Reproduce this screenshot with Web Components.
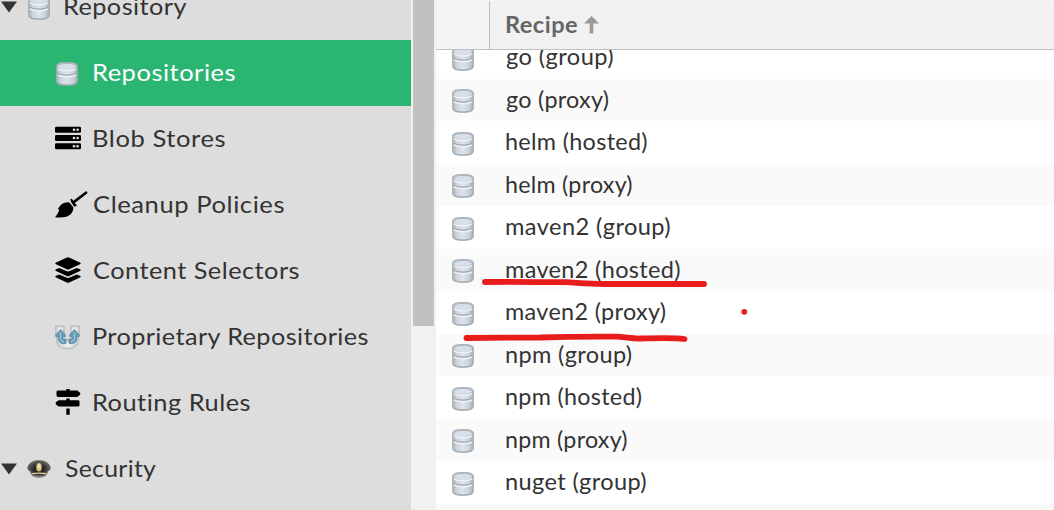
<!DOCTYPE html>
<html lang="en">
<head>
<meta charset="utf-8">
<title>Repositories</title>
<style>
html, body { margin: 0; height: 100%; overflow: hidden; background: #fff; font-family: Lato, "Open Sans", sans-serif; }
</style>
</head>
<body>
<repo-console></repo-console>
<script>
const define = (name, html, setup) => {
  const tpl = document.createElement('template');
  tpl.innerHTML = html;
  customElements.define(name, class extends HTMLElement {
    connectedCallback() {
      if (this.shadowRoot) return;
      this.attachShadow({ mode: 'open' }).append(tpl.content.cloneNode(true));
      if (setup) setup(this, this.shadowRoot);
    }
  });
};

const ICONS = {
  database: `<svg width="22" height="23.500" viewBox="0 0 22 24" preserveAspectRatio="none"><defs>
    <linearGradient id="b"><stop offset="0" stop-color="#a9b1b8"/><stop offset=".2" stop-color="#cdd4dc"/><stop offset=".5" stop-color="#dce3ec"/><stop offset=".8" stop-color="#c9d0d8"/><stop offset="1" stop-color="#a2abb2"/></linearGradient></defs>
    <path d="M.6 4.500C.6 1.600 3 .5 11 .5s10.400 1.100 10.400 4v15c0 3-2.500 4.300-10.400 4.300S.6 22.500.6 19.500z" fill="url(#b)" stroke="#a4adb3" stroke-width=".9"/>
    <ellipse cx="11" cy="4.600" rx="8.800" ry="2.900" fill="#d7dfe8"/>
    <path d="M2.500 3.500Q4 1.400 11 1.400t8.500 2.100" fill="none" stroke="#a6afb6" stroke-width=".9"/>
    <path d="M1.800 6.600Q4 9 11 9t9.200-2.400" fill="none" stroke="#eef2f6" stroke-width="1.300"/>
    <path d="M1 11.300Q4 13.300 11 13.300t10-2" fill="none" stroke="#a1a9b1" stroke-width="1.300"/>
    <path d="M1.800 13Q4.500 15 11 15t9.200-2" fill="none" stroke="#eff3f8" stroke-width="1.500"/>
    <path d="M1.500 21Q4 23.500 11 23.500t9.500-2.500" fill="none" stroke="#9aa7ac" stroke-width="1"/></svg>`,
  server: `<svg width="26" height="24" viewBox="0 0 26 24"><g><rect y=".7" width="26" height="6" rx="1.200"/><rect y="9" width="26" height="6" rx="1.200"/><rect y="17.200" width="26" height="6" rx="1.200"/></g><g fill="#ddd"><circle cx="19" cy="3.800" r="1.300"/><circle cx="22.600" cy="3.800" r="1.300"/><circle cx="19" cy="12" r="1.300"/><circle cx="22.600" cy="12" r="1.300"/><circle cx="19" cy="20.200" r="1.300"/><circle cx="22.600" cy="20.200" r="1.300"/></g></svg>`,
  broom: `<svg width="33" height="27" viewBox="0 0 33 27"><path d="M0 26.200C2 24 3.400 21 4.500 18.400L3.200 18.500Q2.800 17.500 3.800 16.400C6 13 9 11.300 12.500 11.200L14.500 11.600 18.300 16.500C18.500 21 15.500 24.400 11.500 25.700Q7 26.800 0 26.200z"/><path d="M15.300 8.400Q16.300 7.300 17.200 8.300L18.300 9.700 30.500.5Q31.600-.1 32.200.9T31.800 2.700L19.800 11.900 22 14.500Q20.500 15.700 19 15.400 16.500 12.800 15.300 8.400z"/></svg>`,
  layers: `<svg width="26" height="26" viewBox="0 0 26 26"><path d="M13 .2Q13.500.2 25 5.400 26.800 6.400 25 7.300L14.200 12.300Q13 12.800 11.800 12.300L1 7.300Q-.8 6.400 1 5.400 12.500.2 13 .2zM4.200 10.900 11.200 14.100Q13 14.900 14.800 14.100L21.800 10.900 25 12.300Q26.800 13.200 25 14L14.200 18.900Q13 19.400 11.800 18.900L1 14Q-.8 13.200 1 12.300zM4.200 17.400 11.200 20.600Q13 21.400 14.800 20.600L21.800 17.400 25 18.800Q26.800 19.700 25 20.500L14.200 25.400Q13 25.900 11.800 25.400L1 20.500Q-.8 19.700 1 18.800z"/></svg>`,
  magnet: `<svg width="25" height="25" viewBox="0 0 25 25"><path d="M.8 1.200H9V10C9 13 10.500 14.500 12.500 14.500S16 13 16 10V1.200H24.200V9.500Q24.200 11 23.200 12.500V16C22.500 21 18.500 24 12.500 24S2.500 21 1.800 16V12.500Q.8 11 .8 9.500z" fill="#d5dadd" stroke="#b3babe" stroke-width="1.200"/><path d="M2.500 2.500H7.500V7H2.500zM17.500 2.500H22.500V7H17.500z" fill="#e9ebec"/><path d="M8 20.500Q12.500 23 17 20.500L16 17Q12.500 18.500 9 17z" fill="#eef0f1"/><g fill="#699cb6" stroke="#5588a0" stroke-width=".8"><path d="M5.500 4.500 10.300 9.800V11.500H7.900V13.800L11.200 14.700 10.700 18.700Q4 19 3.300 14.500V11.500H.8V9.800z"/><path d="M19.500 4.500 24.200 9.800V11.500H21.700V14.500Q21 19 14.300 18.700L13.800 14.700 17.100 13.800V11.500H14.700V9.800z"/></g><path d="M5.500 7V14Q6 16 9 16.800M19.500 7V14Q19 16 16 16.800" fill="none" stroke="#9bc2d6" stroke-width="1.200"/></svg>`,
  signs: `<svg width="26" height="26" viewBox="0 0 26 26"><path d="M11.300 0H14.700V1.600H22.400L25 3.700Q25.900 4.800 25 5.800L22.400 8H3Q1.500 8 1.500 6.600V3Q1.500 1.600 3 1.600H11.300zM11.300 9.600H14.700V11.200H23Q24.500 11.200 24.500 12.600V16.200Q24.500 17.600 23 17.600H3.600L1 15.500Q.1 14.400 1 13.300L3.600 11.200H11.300zM11.300 19.500H14.700V25.700H11.300z"/></svg>`,
  cap: `<svg width="24" height="18" viewBox="0 0 24 18"><defs><radialGradient id="s"><stop offset=".4" stop-color="#252525"/><stop offset="1" stop-color="#6b6a67"/></radialGradient></defs><path d="M.3 7.500C2 2 7 .3 12 .3S22 2 23.700 7.500Q24 10 20.600 11.500L20.500 13.500C18.500 16.500 16 17.700 12 17.700S5.500 16.500 3.500 13.500L3.400 11.500Q0 10 .3 7.500z" fill="url(#s)"/><path d="M4.500 13Q12 12 19.500 13V14.300Q12 13.400 4.500 14.300z" fill="#e4cf92"/><ellipse cx="12" cy="7.300" rx="2.800" ry="4.300" fill="#d2bd7e"/><ellipse cx="12" cy="6.300" rx="1.300" ry="2.500" fill="#eee2b8"/><path d="M5.500 15.900Q12 17.800 18.500 15.900" fill="none" stroke="#99948a"/></svg>`,
  caret: `<svg width="16" height="12" viewBox="0 0 16 12"><path d="M0 .5H16L8 11.500z" fill="#333"/></svg>`,
  sort: `<svg width="15" height="18" viewBox="0 0 15 18"><path d="M7.500 0 15 7.500H9.300V17.500H5.700V7.500H0z" fill="#999"/></svg>`
};

define('app-icon', `<style>:host{display:block;line-height:0}svg{display:block;overflow:visible}</style>`, (el, root) => {
  root.append(document.createRange().createContextualFragment(ICONS[el.getAttribute('name')]));
});

/* A label whose glyphs span the given width: part of the slack goes to tracking, the rest to a wider face. */
const pen = document.createElement('canvas').getContext('2d');
define('fit-label', `<style>:host{display:block;white-space:pre;flex:none}span{display:inline-block;transform-origin:0 50%}</style><span><slot></slot></span>`, (el, root) => {
  const cs = getComputedStyle(el), text = el.textContent, goal = +el.getAttribute('ink');
  pen.font = `${cs.fontWeight} ${cs.fontSize} ${cs.fontFamily}`;
  const m = pen.measureText(text);
  const ink = m.actualBoundingBoxLeft + m.actualBoundingBoxRight;
  const tracked = ink + (goal - ink) * 0.4, scale = goal / tracked;
  const span = root.querySelector('span');
  span.style.letterSpacing = (tracked - ink) / (text.length - 1) + 'px';
  span.style.transform = `scaleX(${scale})`;
  el.style.marginLeft = m.actualBoundingBoxLeft * scale + 'px';
});

define('nav-item', `<style>
  :host{display:flex;height:66px;flex:none;align-items:center;color:#333;font-size:24px;line-height:30px}
  :host([selected]){background:#2ab573;color:#fff}
  .caret{width:24px;flex:none}
  .icon{flex:none;width:38.800px}
  :host([child]) .caret{width:55px}
  :host(:not([child])) .icon{width:41.300px}
  .caret app-icon{margin-left:1px}
  fit-label{margin-top:-2px}
</style><div class="caret"></div><div class="icon"></div><fit-label></fit-label>`, (el, root) => {
  const child = el.hasAttribute('child');
  if (!child) root.querySelector('.caret').innerHTML = '<app-icon name="caret"></app-icon>';
  const name = el.getAttribute('icon'), icon = document.createElement('app-icon');
  icon.setAttribute('name', name);
  icon.style.marginLeft = { database: child ? '1px' : '4px', cap: '3px' }[name] || '0';
  icon.style.marginTop = { database: '.5px', magnet: '1px', server: '-2px', broom: '-1px', layers: '-2px', signs: '-2px' }[name] || '0';
  root.querySelector('.icon').append(icon);
  const label = document.createElement('fit-label');
  label.setAttribute('ink', el.getAttribute('ink'));
  label.textContent = el.getAttribute('label');
  root.querySelector('fit-label').replaceWith(label);
});

define('nav-tree', `<style>
  :host{display:flex;width:411px;height:510px;flex:none;background:#ddd;overflow:hidden}
  div{display:flex;flex-direction:column;width:100%;margin-top:-26px}
</style><div>
  <nav-item icon="database" label="Repository" ink="122"></nav-item>
  <nav-item child selected icon="database" label="Repositories" ink="141"></nav-item>
  <nav-item child icon="server" label="Blob Stores" ink="131"></nav-item>
  <nav-item child icon="broom" label="Cleanup Policies" ink="190"></nav-item>
  <nav-item child icon="layers" label="Content Selectors" ink="205"></nav-item>
  <nav-item child icon="magnet" label="Proprietary Repositories" ink="274.500"></nav-item>
  <nav-item child icon="signs" label="Routing Rules" ink="156.500"></nav-item>
  <nav-item icon="cap" label="Security" ink="91.500"></nav-item>
</div>`);

define('scroll-bar', `<style>:host{display:block;width:21px;height:510px;padding:0 2px;background:#f1f1f1;flex:none}div{height:326px;background:#c1c1c1}</style><div></div>`);

define('recipe-row', `<style>
  :host{display:grid;grid-template-columns:69.700px 1fr;height:43px;flex:none;background:#fff;color:#333;font-size:22.500px;line-height:42px}
  :host([odd]){height:42px;background:#fafafa}
  app-icon{margin:10.500px 0 0 16px}
  :host([odd]) app-icon{margin-top:9.500px}
</style><app-icon name="database"></app-icon><slot></slot>`);

define('recipe-grid', `<style>
  :host{display:flex;flex-direction:column;flex:1;height:510px;overflow:hidden;background:#fff}
  header{display:grid;grid-template-columns:53px 1fr;height:49px;flex:none;box-sizing:content-box;border-bottom:1px solid #c0c0c0;background:#f5f5f5}
  .title{display:flex;align-items:center;gap:7px;margin-top:1px;border-left:1px solid #c0c0c0;background:#f1f1f1;padding-left:16px;color:#666;font-size:22.500px;font-weight:700;line-height:46px}
  .title fit-label{width:72px;margin-top:-1px}
  .body{flex:1;overflow:hidden}
  .rows{display:flex;flex-direction:column;margin-top:-14px}
</style>
<header><span></span><div class="title"><fit-label ink="71.500">Recipe</fit-label><app-icon name="sort"></app-icon></div></header>
<div class="body"><div class="rows"></div></div>`, (el, root) => {
  const rows = [['go (group)', 106.5], ['go (proxy)', 102], ['helm (hosted)', 140.5], ['helm (proxy)', 125.5], ['maven2 (group)', 163.5], ['maven2 (hosted)', 173.5],
    ['maven2 (proxy)', 159], ['npm (group)', 125], ['npm (hosted)', 135], ['npm (proxy)', 120.5], ['nuget (group)', 139.5], ['nuget (hosted)', 150]];
  root.querySelector('.rows').innerHTML = rows.map(([t, w], i) =>
    `<recipe-row${i % 2 ? ' odd' : ''}>${i < 11 ? `<fit-label ink="${w}">${t}</fit-label>` : ''}</recipe-row>`).join('');
});

define('ink-marks', `<style>:host{position:absolute;inset:0;pointer-events:none}svg{display:block}</style>
<svg width="1054" height="510" fill="none" stroke="#e91c1c" stroke-width="5.800" stroke-linecap="round" stroke-linejoin="round">
<path d="M485 282C510 281.500 540 282 566 282.200C580 283 590 284 604 284H704"/>
<path d="M466.500 338L540 337.500C570 336.500 600 336.500 618 336.700C628 337.500 633 338.800 640 338.500C655 338 675 337.500 684.500 339"/>
<circle cx="744.300" cy="311.800" r="2.900" fill="#e91c1c" stroke="none"/></svg>`);

define('repo-console', `<style>:host{display:flex;position:relative;width:1054px;height:510px;overflow:hidden}</style>
<nav-tree></nav-tree><scroll-bar></scroll-bar><recipe-grid></recipe-grid><ink-marks></ink-marks>`);
</script>
</body>
</html>
